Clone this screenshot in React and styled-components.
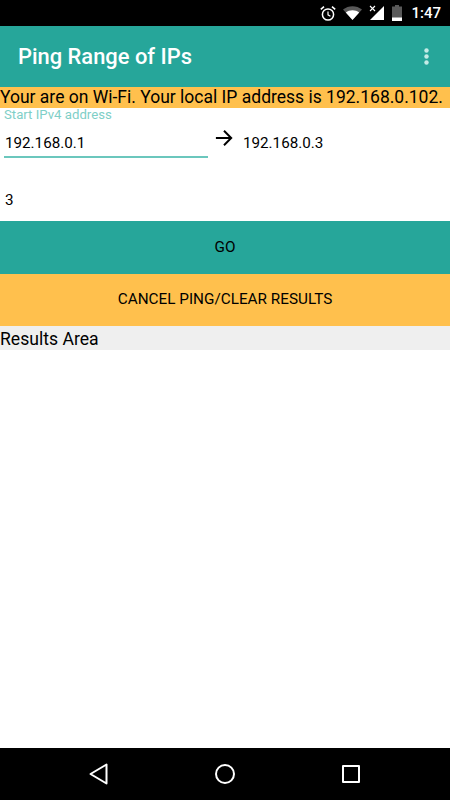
import React from 'react'
import styled, { createGlobalStyle } from 'styled-components'

const GlobalStyle = createGlobalStyle`
    html, body {
        margin: 0;
        padding: 0;
        background: #ffffff;
    }
    * {
        box-sizing: border-box;
    }
`

const Screen = styled.div`
    display: flex;
    flex-direction: column;
    width: 450px;
    height: 800px;
    overflow: hidden;
    font-family: Roboto, "Liberation Sans", sans-serif;
    color: #000000;
    background: #ffffff;
`

const StatusBar = styled.div`
    display: flex;
    align-items: center;
    justify-content: flex-end;
    flex: 0 0 26px;
    padding-right: 9px;
    background: #000000;
    color: #ffffff;
`

const StatusIcons = styled.div`
    display: flex;
    align-items: center;
    gap: 7px;
`

const Clock = styled.span`
    margin-left: 2px;
    font-size: 15px;
    font-weight: 500;
    line-height: 26px;
`

const AppBar = styled.div`
    display: flex;
    align-items: center;
    justify-content: space-between;
    flex: 0 0 61px;
    padding: 0 21px 0 18px;
    background: #26a69a;
`

const Title = styled.div`
    font-size: 21.9px;
    font-weight: 500;
    color: #ffffff;
`

const Banner = styled.div`
    flex: 0 0 21px;
    font-size: 17.5px;
    line-height: 21px;
    white-space: nowrap;
    background: #ffc04d;
`

const Form = styled.div`
    display: flex;
    flex-direction: column;
    flex: 0 0 113px;
    padding-left: 4px;
`

const FloatLabel = styled.div`
    height: 14px;
    font-size: 13.2px;
    line-height: 14px;
    color: #7fcfc7;
`

const AddressRow = styled.div`
    display: flex;
    align-items: flex-start;
    height: 57px;
`

const StartField = styled.div`
    width: 204px;
    height: 36px;
    padding: 12px 0 0 1px;
    font-size: 15.2px;
    line-height: 18px;
    border-bottom: 2px solid #6bc7bd;
`

const Arrow = styled.svg`
    display: block;
    width: 18px;
    height: 18px;
    margin: 7px 0 0 7px;
`

const EndAddress = styled.div`
    margin: 12px 0 0 10px;
    font-size: 15.2px;
    line-height: 18px;
`

const CountField = styled.div`
    font-size: 15.2px;
    line-height: 18px;
    padding: 12px 0 0 1px;
`

const ActionButton = styled.div`
    display: flex;
    align-items: center;
    justify-content: center;
    flex: 0 0 ${props => props.tall ? '53px' : '52px'};
    padding-bottom: 2px;
    font-size: 15.3px;
    background: ${props => props.color};
`

const ResultsHeader = styled.div`
    flex: 0 0 24px;
    min-height: 0;
    padding-top: 2px;
    font-size: 17.6px;
    line-height: 22px;
    background: #efefef;
`

const ResultsBody = styled.div`
    flex: 1;
    background: #ffffff;
`

const NavBar = styled.div`
    display: flex;
    align-items: center;
    justify-content: space-between;
    flex: 0 0 52px;
    padding: 0 89px;
    background: #000000;
`

const App = () => {
    return (
        <Screen>
            <GlobalStyle />
            <StatusBar>
                <StatusIcons>
                    <svg width="16" height="17" viewBox="0 0 16 17" fill="none" stroke="#fff">
                        <circle cx="8" cy="9.5" r="5.6" strokeWidth="1.5" />
                        <path d="M8 6.5V9.8L10.4 11.2" strokeWidth="1.2" />
                        <path d="M0.8 4.4L4 1.6M15.2 4.4L12 1.6" strokeWidth="1.6" />
                    </svg>
                    <svg width="19" height="14" viewBox="0 0 19 14">
                        <path d="M0 3.5C5.5 -1 13.5 -1 19 3.5L9.5 14Z" fill="#fff" fillOpacity="0.35" />
                        <path d="M2.8 6.6C6.6 3.6 12.4 3.6 16.2 6.6L9.5 14Z" fill="#fff" />
                    </svg>
                    <svg width="16" height="16" viewBox="0 0 16 16">
                        <path d="M15 1V15H1Z" fill="#fff" />
                        <path d="M1 1L6 6M6 1L1 6" stroke="#fff" strokeWidth="1.1" />
                    </svg>
                    <svg width="10" height="16" viewBox="0 0 10 16">
                        <path d="M3 0H7V1.5H10V16H0V1.5H3Z" fill="#fff" fillOpacity="0.35" />
                        <path d="M0 12.5H10V16H0Z" fill="#fff" />
                    </svg>
                    <Clock>1:47</Clock>
                </StatusIcons>
            </StatusBar>
            <AppBar>
                <Title>Ping Range of IPs</Title>
                <svg width="5" height="17" viewBox="0 0 5 17" fill="#c4ebe6">
                    <circle cx="2.5" cy="2.5" r="2.2" />
                    <circle cx="2.5" cy="8.5" r="2.2" />
                    <circle cx="2.5" cy="14.5" r="2.2" />
                </svg>
            </AppBar>
            <Banner>Your are on Wi-Fi. Your local IP address is 192.168.0.102.</Banner>
            <Form>
                <FloatLabel>Start IPv4 address</FloatLabel>
                <AddressRow>
                    <StartField>192.168.0.1</StartField>
                    <Arrow viewBox="0 0 20 20" fill="none" stroke="#000" strokeWidth="2.2">
                        <path d="M1 10H18M10 2L18 10L10 18" />
                    </Arrow>
                    <EndAddress>192.168.0.3</EndAddress>
                </AddressRow>
                <CountField>3</CountField>
            </Form>
            <ActionButton color="#26a69a" tall>GO</ActionButton>
            <ActionButton color="#ffc04d">CANCEL PING/CLEAR RESULTS</ActionButton>
            <ResultsHeader>Results Area</ResultsHeader>
            <ResultsBody />
            <NavBar>
                <svg width="20" height="22" viewBox="0 0 20 22" fill="none" stroke="#fff" strokeWidth="2" strokeLinejoin="round">
                    <path d="M17.5 1.5V20.5L1.5 11Z" />
                </svg>
                <svg width="22" height="22" viewBox="0 0 22 22" fill="none" stroke="#fff" strokeWidth="2">
                    <circle cx="11" cy="11" r="9" />
                </svg>
                <svg width="20" height="20" viewBox="0 0 20 20" fill="none" stroke="#fff" strokeWidth="2" strokeLinejoin="round">
                    <rect x="2" y="2" width="16" height="16" />
                </svg>
            </NavBar>
        </Screen>
    )
}

export default App
